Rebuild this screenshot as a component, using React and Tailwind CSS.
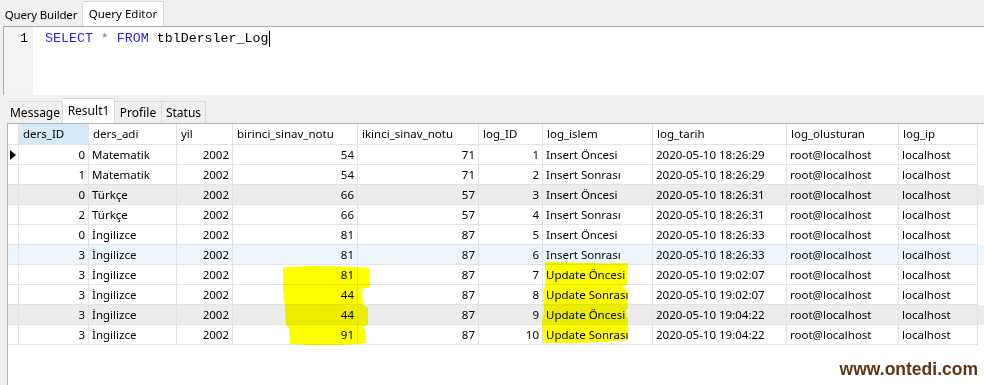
import React from "react";

const headers = ["", "ders_ID", "ders_adi", "yil", "birinci_sinav_notu", "ikinci_sinav_notu", "log_ID", "log_islem", "log_tarih", "log_olusturan", "log_ip"];
const rows = [
  [0, "Matematik", 2002, 54, 71, 1, "Insert Öncesi", "2020-05-10 18:26:29"],
  [1, "Matematik", 2002, 54, 71, 2, "Insert Sonrası", "2020-05-10 18:26:29"],
  [0, "Türkçe", 2002, 66, 57, 3, "Insert Öncesi", "2020-05-10 18:26:31"],
  [2, "Türkçe", 2002, 66, 57, 4, "Insert Sonrası", "2020-05-10 18:26:31"],
  [0, "İngilizce", 2002, 81, 87, 5, "Insert Öncesi", "2020-05-10 18:26:33"],
  [3, "İngilizce", 2002, 81, 87, 6, "Insert Sonrası", "2020-05-10 18:26:33"],
  [3, "İngilizce", 2002, 81, 87, 7, "Update Öncesi", "2020-05-10 19:02:07"],
  [3, "İngilizce", 2002, 44, 87, 8, "Update Sonrası", "2020-05-10 19:02:07"],
  [3, "İngilizce", 2002, 44, 87, 9, "Update Öncesi", "2020-05-10 19:04:22"],
  [3, "İngilizce", 2002, 91, 87, 10, "Update Sonrası", "2020-05-10 19:04:22"],
];
const rowBg = ["bg-white", "bg-white", "bg-[#ececec]", "bg-white", "bg-white", "bg-[#eef6fd]", "bg-white", "bg-white", "bg-[#ececec]", "bg-white"];
const numeric = [false, true, false, true, true, true, true, false, false, false, false];

const gridTemplate = "grid grid-cols-[11px_70px_88px_56px_125px_121px_64px_110px_134px_112px_79px]";

export default function App() {
  return (
    <div className="relative w-[984px] h-[385px] overflow-hidden bg-[#f0f0f0] text-black flex flex-col" style={{ fontFamily: '"Noto Sans", "Open Sans", sans-serif' }}>
      {/* top tabs */}
      <div className="h-[26px] flex items-end text-[11.5px] leading-none whitespace-nowrap">
        <div className="h-[23px] w-[83px] flex items-center justify-center border-r border-[#d9d9d9] tracking-[-0.2px]">Query Builder</div>
        <div className="h-[25px] w-[81px] flex items-center justify-center bg-white border-t border-r border-[#d9d9d9]">Query Editor</div>
      </div>
      {/* editor */}
      <div className="ml-[3px] h-[69px] flex bg-white border-t border-l border-[#a8a8a8]">
        <div className="w-[29px] bg-[#f3f3f3] text-right pr-[5px] pt-[4px] text-[13.3px] leading-[16px]" style={{ fontFamily: '"Liberation Mono", monospace' }}>1</div>
        <div className="pl-[12px] pt-[4px] text-[13.3px] leading-[16px] flex items-start" style={{ fontFamily: '"Liberation Mono", monospace' }}>
          <span className="text-[#2a2ad8]">SELECT</span>
          <span className="whitespace-pre text-[#777]"> * </span>
          <span className="text-[#2a2ad8]">FROM</span>
          <span className="whitespace-pre"> tblDersler_Log</span>
          <span className="w-px h-[16px] bg-black ml-px"></span>
        </div>
      </div>
      {/* result tabs */}
      <div className="h-[28px] flex items-end pl-[8px] text-[12px] leading-none whitespace-nowrap">
        <div className="h-[22px] w-[55px] flex items-center justify-center border-t border-r border-[#d9d9d9]">Message</div>
        <div className="h-[25px] w-[52px] flex items-center justify-center bg-white border-t border-r border-[#d9d9d9]">Result1</div>
        <div className="h-[22px] w-[47px] flex items-center justify-center border-t border-r border-[#d9d9d9]">Profile</div>
        <div className="h-[22px] w-[44px] flex items-center justify-center border-t border-r border-[#d9d9d9]">Status</div>
      </div>
      {/* grid */}
      <div className="ml-[7px] flex-1 bg-white border-l border-t border-[#b4b4b4] text-[11.5px] leading-none whitespace-nowrap">
        <div className={gridTemplate}>
          {headers.map((h, i) => (
            <div key={i} className={`h-[21px] flex items-center pl-[4px] border-r border-b border-[#e3e3e3] ${i === 1 ? "bg-[#d6e9f9]" : "bg-white"}`}>{h}</div>
          ))}
        </div>
        {rows.map((r, ri) => {
          const cells = ["", ...r, "root@localhost", "localhost"];
          return (
            <div key={ri} className={`${gridTemplate} ${rowBg[ri]}`}>
              {cells.map((c, ci) => (
                <div key={ci} className={`h-[20px] flex items-center border-r border-b border-[#e3e3e3] ${ci === 0 ? "justify-center" : numeric[ci] ? "justify-end pr-[3px]" : "pl-[3px]"}`}>
                  {ci === 0 && ri === 0 ? (
                    <svg width="6" height="10" viewBox="0 0 6 10"><path d="M0 0 L6 5 L0 10 Z" fill="#000" /></svg>
                  ) : (
                    c
                  )}
                </div>
              ))}
            </div>
          );
        })}
      </div>
      {/* marker highlights */}
      <svg className="absolute inset-0 pointer-events-none mix-blend-multiply" width="984" height="385" viewBox="0 0 984 385">
        <path d="M283,268 C300,265 340,266 369,268 L370,287 L362,289 L363,305 L368,307 L368,325 L362,327 L365,330 L366,343 C340,346 310,345 290,344 L289,328 L286,325 L285,308 L283,290 Z" fill="#ffff00" />
        <path d="M545,262 C570,262 600,264 628,263 L627,285 L622,287 L627,290 L628,308 L625,312 L628,318 L628,340 C600,343 570,343 543,343 L542,320 L544,312 L543,290 L545,286 Z" fill="#ffff00" />
      </svg>
      {/* watermark */}
      <div className="absolute right-[6px] bottom-[7px] text-[17.5px] font-bold leading-none text-[#5e3516]" style={{ fontFamily: '"Liberation Sans", Arial, sans-serif' }}>www.ontedi.com</div>
    </div>
  );
}
